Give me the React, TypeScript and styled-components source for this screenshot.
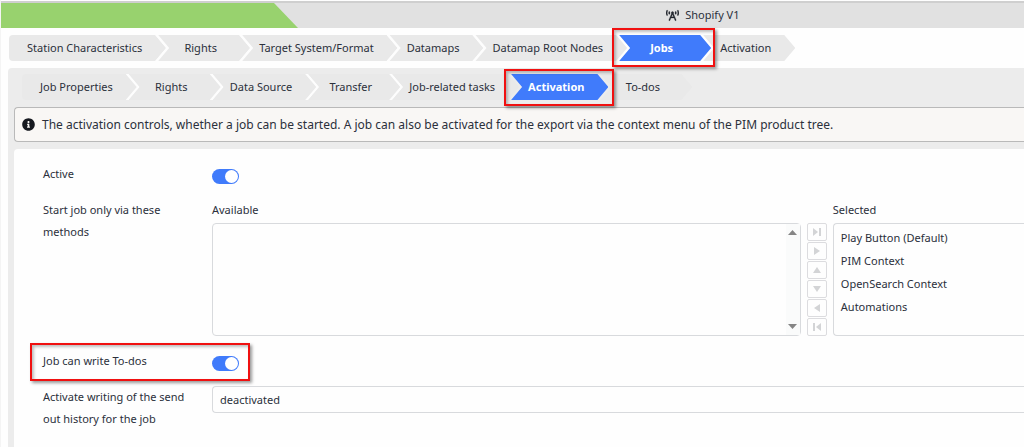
import React from 'react';
import styled, { createGlobalStyle, css } from 'styled-components';
import { FaBroadcastTower, FaInfoCircle } from 'react-icons/fa';

const GlobalStyle = createGlobalStyle`
  * { box-sizing: border-box; }
  body {
    margin: 0;
    background: #fefefe;
    color: #2b303b;
    font: 11px/22px 'Noto Sans', sans-serif;
    overflow-x: hidden;
  }
  button, input, select { font: inherit; color: inherit; margin: 0; }
`;

const highlight = css`
  position: absolute;
  border: 2px solid #f01010;
  box-shadow: 2px 2px 3px rgba(0, 0, 0, 0.4), inset 2px 2px 3px rgba(0, 0, 0, 0.25);
  pointer-events: none;
`;

const Page = styled.div`
  min-height: 100vh;
  display: flex;
  flex-direction: column;
  border-left: 1px solid #f4f4f4;
  padding-top: 1px;
`;

const TitleBar = styled.header`
  display: flex;
  height: 27px;
  background: #e1e1e1;
  border-top: 2px solid #cfcfcf;
`;

const Progress = styled.div`
  width: 297px;
  background: #98d26e;
  clip-path: polygon(0 0, 273px 0, 100% 100%, 0 100%);
`;

const Title = styled.h1`
  flex: 1;
  display: flex;
  align-items: center;
  gap: 6px;
  margin: 0;
  padding: 0 0 1px 36%;
  font-size: 11px;
  font-weight: 400;
  svg { color: #22262e; }
`;

const Steps = styled.nav<{ $nested?: boolean }>`
  display: flex;
  height: 26px;
  margin: ${(p) => (p.$nested ? '6px 0 7px 8px' : '7px 0 7px 8px')};
`;

const StepShell = styled.div<{ $marked?: boolean; $nested?: boolean }>`
  position: relative;
  flex: none;
  min-width: 84px;
  display: flex;
  & + &::before {
    content: '';
    position: absolute;
    inset: 0 auto 0 -2px;
    width: 14px;
    background: #fdfdfd;
    clip-path: polygon(0 0, 3px 0, 100% 50%, 3px 100%, 0 100%, 11px 50%);
  }
  ${(p) => p.$marked && css`
    z-index: 1;
    &::after {
      content: '';
      ${highlight}
      inset: ${p.$nested ? '-5px -15px -6px -6px' : '-7px -13px -6px -6px'};
    }
  `}
`;

const Step = styled.button<{ $active?: boolean; $first?: boolean }>`
  flex: 1 0 auto;
  height: 26px;
  margin-right: -9px;
  padding: 0 24px 0 18px;
  border: 0;
  border-radius: ${(p) => (p.$first ? '4px 0 0 4px' : '0')};
  background: ${(p) => (p.$active ? '#407bfb' : '#e9e9e9')};
  color: ${(p) => (p.$active ? '#fff' : '#2b303b')};
  font-weight: ${(p) => (p.$active ? 700 : 400)};
  line-height: 26px;
  white-space: nowrap;
  clip-path: ${(p) =>
    p.$first
      ? 'polygon(0 0, calc(100% - 11px) 0, 100% 50%, calc(100% - 11px) 100%, 0 100%)'
      : 'polygon(1px 0, calc(100% - 11px) 0, 100% 50%, calc(100% - 11px) 100%, 1px 100%, 12px 50%)'};
`;

const Panel = styled.main`
  flex: 1;
  display: flex;
  flex-direction: column;
  margin-left: 7px;
  padding-left: 6px;
  border-radius: 4px 0 0 0;
  background: #ececec;
`;

const Info = styled.p`
  display: flex;
  align-items: center;
  gap: 7px;
  height: 35px;
  margin: 0 0 7px;
  padding-left: 7px;
  border: 1px solid #b9b9b9;
  border-right: 0;
  border-radius: 4px 0 0 4px;
  background: #f9f7f5;
  font-size: 12px;
  svg { color: #16191f; }
`;

const Form = styled.form`
  flex: 1;
  display: grid;
  grid-template-columns: 145px minmax(0, 1fr);
  column-gap: 24px;
  align-content: start;
  padding: 14px 0 14px 29px;
  border-radius: 4px 0 0 0;
  background: #fefefe;
`;

const Row = styled.div`
  position: relative;
  display: grid;
  grid-column: 1 / -1;
  grid-template-columns: subgrid;
  align-items: start;
  margin-bottom: 14px;
`;

const Marker = styled.span`
  ${highlight}
  top: -7px;
  left: -13px;
  width: 220px;
  height: 38px;
`;

const Toggle = styled.input`
  appearance: none;
  display: flex;
  justify-content: flex-end;
  width: 27px;
  height: 15px;
  margin-top: 6px;
  padding: 1px;
  border-radius: 8px;
  background: #407bfb;
  &::before {
    content: '';
    width: 13px;
    height: 13px;
    border-radius: 50%;
    background: #fff;
  }
  &:not(:checked) { justify-content: flex-start; background: #bbb; }
`;

const Transfer = styled.div`
  display: grid;
  grid-template-columns: minmax(0, 77fr) 20px minmax(0, 25fr);
  column-gap: 6px;
`;

const Heading = styled.span<{ $column: number }>`
  grid-column: ${(p) => p.$column};
  margin-bottom: 2px;
`;

const ListBox = styled.ul<{ $open?: boolean }>`
  display: flex;
  flex-direction: column;
  height: 113px;
  margin: 0;
  padding: 2px 7px;
  border: 1px solid #d8dadd;
  border-right-width: ${(p) => (p.$open ? '0' : '1px')};
  border-radius: ${(p) => (p.$open ? '4px 0 0 4px' : '4px')};
  list-style: none;
  line-height: 23px;
`;

const ScrollRail = styled.li`
  flex: 1;
  align-self: flex-end;
  display: flex;
  flex-direction: column;
  justify-content: space-between;
  align-items: center;
  width: 14px;
  margin: -2px -7px;
  padding: 6px 0;
  background: #fafbfb;
  color: #858585;
`;

const Movers = styled.div`
  display: flex;
  flex-direction: column;
  gap: 1px;
`;

const Mover = styled.button`
  display: flex;
  align-items: center;
  justify-content: center;
  height: 18px;
  padding: 0;
  border: 1px solid #dcdcdf;
  border-radius: 2px;
  background: #fefefe;
  color: #d3d4d6;
`;

const Select = styled.select`
  appearance: none;
  width: 100%;
  height: 27px;
  padding: 0 7px;
  border: 1px solid #d8dadd;
  border-right: 0;
  border-radius: 4px 0 0 4px;
  background: #fefefe;
`;

const shapes = {
  last: 'M1 1 L6 5 L1 9Z M7 1 H9 V9 H7Z',
  right: 'M2 1 L8 5 L2 9Z',
  up: 'M1 8 L5 2 L9 8Z',
  down: 'M1 2 L5 8 L9 2Z',
  left: 'M8 1 L2 5 L8 9Z',
  first: 'M1 1 H3 V9 H1Z M9 1 L4 5 L9 9Z',
};

const Shape = ({ name }: { name: keyof typeof shapes }) => (
  <svg width="10" height="10" viewBox="0 0 10 10" fill="currentColor" aria-hidden="true">
    <path d={shapes[name]} />
  </svg>
);

const ScrollArrow = ({ down }: { down?: boolean }) => (
  <svg width="9" height="5" viewBox="0 0 9 5" fill="currentColor" aria-hidden="true">
    <path d={down ? 'M0 0H9L4.5 5Z' : 'M0 5H9L4.5 0Z'} />
  </svg>
);

const stationSteps = ['Station Characteristics', 'Rights', 'Target System/Format', 'Datamaps', 'Datamap Root Nodes', 'Jobs', 'Activation'];
const jobSteps = ['Job Properties', 'Rights', 'Data Source', 'Transfer', 'Job-related tasks', 'Activation', 'To-dos'];
const methods = ['Play Button (Default)', 'PIM Context', 'OpenSearch Context', 'Automations'];
const moves: [keyof typeof shapes, string][] = [
  ['last', 'Add all'],
  ['right', 'Add'],
  ['up', 'Move up'],
  ['down', 'Move down'],
  ['left', 'Remove'],
  ['first', 'Remove all'],
];

const StepBar = ({ items, active, nested }: { items: string[]; active: string; nested?: boolean }) => (
  <Steps $nested={nested}>
    {items.map((item, i) => (
      <StepShell key={item} $marked={item === active} $nested={nested}>
        <Step type="button" $active={item === active} $first={i === 0}>{item}</Step>
      </StepShell>
    ))}
  </Steps>
);

export default function App() {
  return (
    <Page>
      <GlobalStyle />
      <TitleBar>
        <Progress />
        <Title><FaBroadcastTower size={13} stroke="currentColor" strokeWidth={10} />Shopify V1</Title>
      </TitleBar>
      <StepBar items={stationSteps} active="Jobs" />
      <Panel>
        <StepBar items={jobSteps} active="Activation" nested />
        <Info>
          <FaInfoCircle size={13} />
          The activation controls, whether a job can be started. A job can also be activated for the export via the context menu of the PIM product tree.
        </Info>
        <Form>
          <Row>
            <label htmlFor="active">Active</label>
            <Toggle id="active" type="checkbox" defaultChecked />
          </Row>
          <Row>
            <span>Start job only via these methods</span>
            <Transfer>
              <Heading $column={1}>Available</Heading>
              <Heading $column={3}>Selected</Heading>
              <ListBox aria-label="Available">
                <ScrollRail aria-hidden="true"><ScrollArrow /><ScrollArrow down /></ScrollRail>
              </ListBox>
              <Movers>
                {moves.map(([name, label]) => (
                  <Mover key={name} type="button" aria-label={label}><Shape name={name} /></Mover>
                ))}
              </Movers>
              <ListBox $open aria-label="Selected">
                {methods.map((m) => <li key={m}>{m}</li>)}
              </ListBox>
            </Transfer>
          </Row>
          <Row>
            <label htmlFor="todos">Job can write To-dos</label>
            <Toggle id="todos" type="checkbox" defaultChecked />
            <Marker />
          </Row>
          <Row>
            <label htmlFor="history">Activate writing of the send out history for the job</label>
            <Select id="history" defaultValue="deactivated">
              <option>deactivated</option>
              <option>activated</option>
            </Select>
          </Row>
        </Form>
      </Panel>
    </Page>
  );
}
